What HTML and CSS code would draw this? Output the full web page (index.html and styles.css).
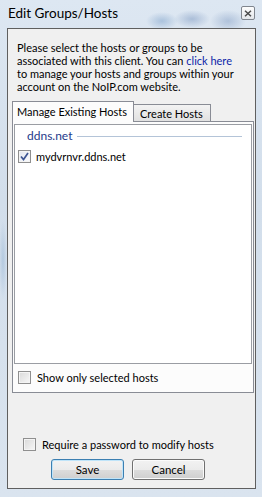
FILE: index.html
```html
<!DOCTYPE html>
<html lang="en">
<head>
    <meta charset="UTF-8">
    <link rel="stylesheet" href="styles.css">
    <title>Edit Groups/Hosts</title>
</head>
<body>
    <div class="frame">
        <div class="titlebar">
            <span class="title">Edit Groups/Hosts</span>
            <div class="close-btn">
                <svg width="8" height="7" viewBox="0 0 8 7">
                    <path d="M1 0.8 L7 6.2 M7 0.8 L1 6.2" stroke="#4a4a4a" stroke-width="1.5" fill="none"/>
                </svg>
            </div>
        </div>

        <div class="client">
            <p class="intro">
                Please select the hosts or groups to be<br>
                associated with this client. You can <a href="#">click here</a><br>
                to manage your hosts and groups within your<br>
                account on the NoIP.com website.
            </p>

            <div class="tabs">
                <div class="tab active">Manage Existing Hosts</div>
                <div class="tab">Create Hosts</div>
            </div>
            <div class="tab-page">
                <div class="host-list">
                    <div class="group-head">
                        <span>ddns.net</span>
                        <div class="group-line"></div>
                    </div>
                    <label class="check-row host">
                        <span class="box checked">
                            <svg width="9" height="9" viewBox="0 0 9 9">
                                <path d="M1 4.5 L3.5 7.5 L8 1" stroke="#3d5592" stroke-width="1.7" fill="none"/>
                            </svg>
                        </span>
                        mydvrnvr.ddns.net
                    </label>
                </div>
                <label class="check-row only-selected">
                    <span class="box"></span>
                    Show only selected hosts
                </label>
            </div>

            <label class="check-row password">
                <span class="box"></span>
                Require a password to modify hosts
            </label>

            <div class="buttons">
                <button class="btn default">Save</button>
                <button class="btn">Cancel</button>
            </div>
        </div>
    </div>
</body>
</html>
```

FILE: styles.css
```css
body {
    margin: 0;
    padding: 0;
    font-family: Lato, 'Noto Sans', sans-serif;
    font-size: 11px;
    color: #000;
}

.frame {
    width: 262px;
    height: 497px;
    box-sizing: border-box;
    padding: 0 6px 0 7px;
    background:
        radial-gradient(ellipse 16px 9px at 162px 21px, rgba(110, 150, 195, 0.45), transparent),
        radial-gradient(ellipse 18px 9px at 192px 19px, rgba(110, 140, 185, 0.45), transparent),
        radial-gradient(ellipse 18px 11px at 228px 21px, rgba(110, 140, 185, 0.4), transparent),
        radial-gradient(ellipse 4px 40px at 3px 260px, rgba(120, 160, 200, 0.35), transparent),
        linear-gradient(to bottom, #dde7f2, #d2deeb 40%, #dae4ef);
}

.titlebar {
    height: 28px;
    display: flex;
    justify-content: space-between;
}

.title {
    font-size: 13.5px;
    line-height: 16px;
    margin: 5px 0 0 1px;
}

.close-btn {
    width: 12px;
    height: 12px;
    margin: 6px 1px 0 0;
    border: 1px solid #80868e;
    border-radius: 2px;
    background: linear-gradient(to bottom, #fdfdfd, #e4e7eb);
    display: flex;
    align-items: center;
    justify-content: center;
}

.client {
    height: 461px;
    box-sizing: border-box;
    background: #f0f0f0;
    border: 1px solid #5f5f5f;
    padding: 0 1px 0 4px;
}

.intro {
    margin: 12px 0 0 5px;
    line-height: 13px;
}

.intro a {
    color: #0b1fa8;
    text-decoration: none;
}

.tabs {
    display: flex;
    align-items: flex-end;
    margin-top: 8px;
    height: 20px;
}

.tab {
    border: 1px solid #898c95;
    border-bottom: none;
    background: linear-gradient(to bottom, #f3f3f3, #e1e1e1);
    padding: 0 7px 0 6px;
    height: 16px;
    line-height: 17px;
}

.tab.active {
    background: #fcfcfc;
    height: 20px;
    line-height: 19px;
    padding: 0 6px 0 4px;
    position: relative;
    margin-bottom: -1px;
}

.tab + .tab {
    border-left: none;
}

.tab-page {
    height: 272px;
    box-sizing: border-box;
    border: 1px solid #898c95;
    background: #fcfcfc;
    padding: 2px 1px 0 1px;
}

.host-list {
    height: 240px;
    box-sizing: border-box;
    border: 1px solid #9a9da3;
    background: #fff;
    padding: 3px 9px 0 3px;
}

.group-head {
    display: flex;
    align-items: center;
    color: #1e3a8a;
    font-size: 12px;
    line-height: 16px;
    padding-left: 9px;
}

.group-line {
    flex: 1;
    height: 1px;
    background: #b4c4d8;
    margin: 1px 0 0 5px;
}

.check-row {
    display: flex;
    align-items: center;
    gap: 5px;
    line-height: 15px;
}

.host {
    margin-top: 5px;
}

.box {
    width: 11px;
    height: 11px;
    border: 1px solid #8f8f8f;
    background: linear-gradient(135deg, #d9d9d9, #f7f7f7);
    box-shadow: inset 0 0 0 1px #f4f4f4;
    display: flex;
    align-items: center;
    justify-content: center;
}

.box.checked {
    background: linear-gradient(135deg, #e2e6ee, #fbfcfe);
}

.only-selected {
    margin: 6px 0 0 4px;
    gap: 6px;
}

.password {
    margin: 44px 0 0 11px;
    gap: 6px;
}

.buttons {
    display: flex;
    gap: 8px;
    margin: 7px 0 0 39px;
}

.btn {
    width: 73px;
    height: 21px;
    font-family: Lato, 'Noto Sans', sans-serif;
    font-size: 11.5px;
    color: #000;
    border: 1px solid #707070;
    border-radius: 3px;
    background: linear-gradient(to bottom, #f2f2f2 0%, #ebebeb 50%, #dddddd 51%, #cfcfcf 100%);
    box-shadow: inset 0 0 0 1px #fbfbfb;
    padding: 0;
}

.btn.default {
    border-color: #3c7fb1;
    box-shadow: inset 0 0 0 1px #bfe4f9;
}
```
